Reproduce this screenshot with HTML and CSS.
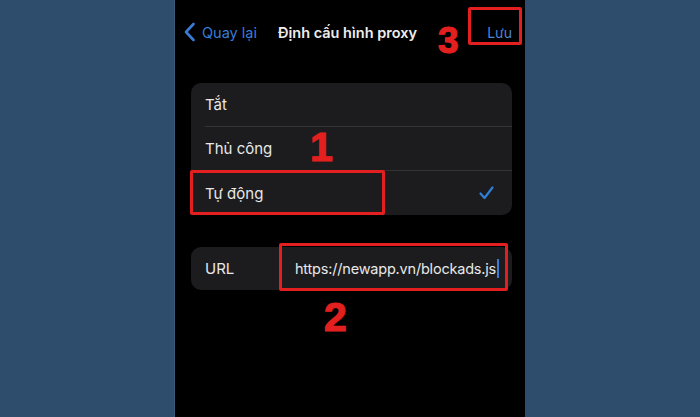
FILE: index.html
```html
<!DOCTYPE html>
<html lang="vi">
<head>
<meta charset="utf-8">
<title>Định cấu hình proxy</title>
<link rel="stylesheet" href="styles.css">
</head>
<body>
<div class="phone">
  <header class="nav">
    <a class="back">
      <svg class="chev" width="13" height="20" viewBox="0 0 13 20"><path d="M10.5 2 L3 10 L10.5 18" fill="none" stroke="#3a7bd5" stroke-width="2.6" stroke-linecap="round" stroke-linejoin="round"/></svg>
      <span>Quay lại</span>
    </a>
    <h1 class="title">Định cấu hình proxy</h1>
    <a class="save">Lưu</a>
  </header>

  <ul class="group">
    <li class="row">Tắt</li>
    <li class="row">Thủ công</li>
    <li class="row last">Tự động
      <svg class="check" width="15" height="14" viewBox="0 0 15 14"><path d="M1.5 7.5 L5.5 12 L13.5 1.5" fill="none" stroke="#2f7fd6" stroke-width="2.2" stroke-linecap="round" stroke-linejoin="round"/></svg>
    </li>
  </ul>

  <div class="group url">
    <span class="label">URL</span>
    <span class="value">https://newapp.vn/blockads.js<i class="caret"></i></span>
  </div>

  <div class="mark box1"></div>
  <div class="mark box2"></div>
  <div class="mark box3"></div>
  <span class="num n1">1</span>
  <span class="num n2">2</span>
  <span class="num n3">3</span>
</div>
</body>
</html>
```

FILE: styles.css
```css
html, body {
  margin: 0;
  height: 100%;
}
body {
  background: #2e4d6c;
  font-family: Inter, "Noto Sans", sans-serif;
}
.phone {
  position: relative;
  margin-left: 175px;
  width: 350px;
  height: 417px;
  background: #000;
  box-shadow: -1px 0 0 #3b5a79;
  overflow: hidden;
}
.nav {
  height: 64px;
  display: grid;
  grid-template-columns: 1fr auto 1fr;
  align-items: center;
  padding: 0 13px 0 8px;
}
.back {
  display: flex;
  align-items: center;
  gap: 6px;
  color: #3a7bd5;
  font-size: 14.5px;
}
.title {
  margin: 0;
  font-size: 14.5px;
  font-weight: 600;
  color: #ededed;
}
.save {
  justify-self: end;
  color: #4a86d8;
  font-size: 14px;
}
.group {
  list-style: none;
  margin: 19px 13px 0 16px;
  padding: 0;
  background: #1c1c1e;
  border-radius: 10px;
}
.row {
  height: 44px;
  display: flex;
  align-items: center;
  justify-content: space-between;
  margin-left: 14px;
  padding-right: 18px;
  border-bottom: 1px solid #333335;
  color: #e8e8e8;
  font-size: 15px;
  box-sizing: border-box;
}
.row.last {
  border-bottom: 0;
}
.group.url {
  margin-top: 32px;
  height: 43px;
  display: flex;
  align-items: center;
  padding-left: 14px;
  color: #e8e8e8;
  font-size: 15px;
}
.label {
  width: 90px;
}
.value {
  display: flex;
  align-items: center;
  font-size: 14.5px;
  letter-spacing: -0.2px;
}
.caret {
  display: inline-block;
  width: 2px;
  height: 19px;
  background: #3a7bd5;
  margin-left: 1px;
}
.mark {
  position: absolute;
  border: 3px solid #e3201f;
  border-radius: 2px;
  box-sizing: border-box;
}
.box1 { left: 15px; top: 170px; width: 195px; height: 45px; }
.box2 { left: 104px; top: 243px; width: 229px; height: 48px; }
.box3 { left: 293px; top: 7px; width: 54px; height: 38px; }
.num {
  position: absolute;
  font-family: "Liberation Sans", Arial, sans-serif;
  font-weight: 700;
  color: #e3201f;
  line-height: 1;
  -webkit-text-stroke: 1.2px #e3201f;
}
.n1 { left: 135px; top: 127px; font-size: 41px; }
.n2 { left: 149px; top: 297px; font-size: 41px; }
.n3 { left: 263px; top: 22px; font-size: 37px; }
```
